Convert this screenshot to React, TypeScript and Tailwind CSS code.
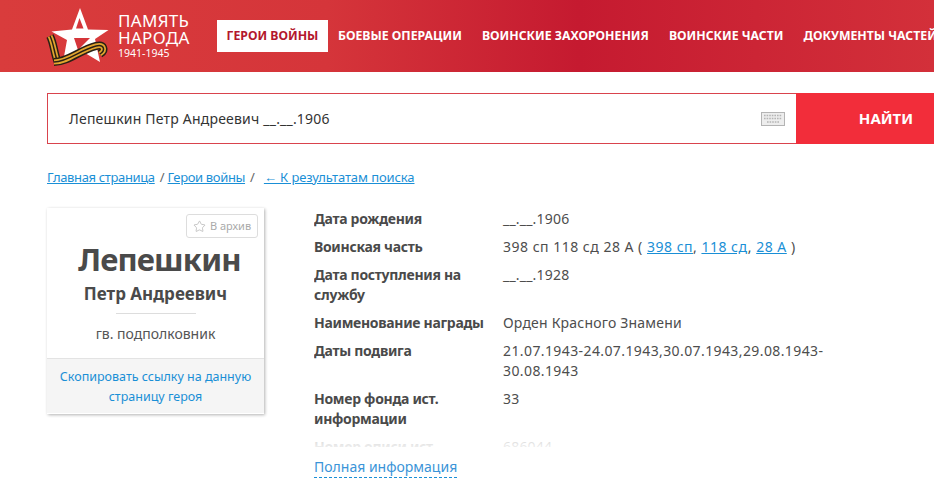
import { Star } from 'lucide-react'
import type { ReactNode } from 'react'

const navItems = ['БОЕВЫЕ ОПЕРАЦИИ', 'ВОИНСКИЕ ЗАХОРОНЕНИЯ', 'ВОИНСКИЕ ЧАСТИ', 'ДОКУМЕНТЫ ЧАСТЕЙ']

// coordinates follow the page: the box starts at x 46, y 4
function Logo() {
  const left = 'M50 36 C54 44 54 53 58 63'
  const band = 'M54 62 C68 62 80 50 96 46 C104 44 106 50 100 54'
  return (
    <svg width="64" height="64" viewBox="46 4 64 64" className="shrink-0">
      <g fill="none">
        <path d={left} stroke="#2a2014" strokeWidth="8" />
        <path d={left} stroke="#e2a52e" strokeWidth="5" />
        <path d={left} stroke="#2a2014" strokeWidth="1.5" />
      </g>
      <path
        d="M80 8 L88 29.5 L108.5 30 L95 39 L100 62 L80 50 L63 62 L67 40 L51.5 31.5 L72 29.5 Z"
        fill="#fff"
      />
      <path d="M79.5 18 L83.5 28.5 L76 28.5 Z" fill="#d5353a" />
      <path d="M74 38 L90 38 L78 50 Z" fill="#d5353a" />
      <g fill="none">
        <path d={band} stroke="#2a2014" strokeWidth="8" />
        <path d={band} stroke="#e2a52e" strokeWidth="5" />
        <path d={band} stroke="#2a2014" strokeWidth="1.5" />
      </g>
    </svg>
  )
}

function Row({ label, children }: { label: string; children: ReactNode }) {
  return (
    <div className="flex leading-5">
      <div className="w-[189px] shrink-0 pr-1 font-bold tracking-[-0.3px] text-[#4a4a4a]">{label}</div>
      <div className="w-[340px] tracking-[0.2px] text-[#4d4d4d]">{children}</div>
    </div>
  )
}

function LinkText({ children }: { children: ReactNode }) {
  return <a className="text-[#1a8fd6] underline">{children}</a>
}

export default function App() {
  return (
    <div className="h-[491px] w-[934px] overflow-hidden bg-white font-['Noto_Sans','Open_Sans',sans-serif] text-[14px]">
      <header className="flex h-[72px] items-center bg-[linear-gradient(90deg,#d93c3c_0%,#d5353a_35%,#c51a30_62%,#d3303a_100%)] pl-[46px]">
        <div className="flex w-[171px] shrink-0 items-center gap-2">
          <Logo />
          <div className="text-white">
            <div className="text-[17px] leading-[17px] tracking-[0.3px]">ПАМЯТЬ</div>
            <div className="text-[17px] leading-[17px] tracking-[0.3px]">НАРОДА</div>
            <div className="mt-[1px] text-[10.5px] leading-[13px]">1941-1945</div>
          </div>
        </div>
        <nav className="flex items-center whitespace-nowrap text-[12.25px] font-bold text-white">
          <div className="flex h-[32px] w-[111px] items-center justify-center bg-white text-[#b3172d]">ГЕРОИ ВОЙНЫ</div>
          <div className="ml-[10px] flex gap-[20px]">
            {navItems.map((item) => (
              <span key={item}>{item}</span>
            ))}
          </div>
        </nav>
      </header>

      <div className="ml-[47px] mt-[21px] flex h-[51px]">
        <div className="flex w-[749px] items-center justify-between border border-r-0 border-[color:#d9434d] pl-[21px] pr-[11px] tracking-[0.2px] text-[#d9434d]">
          <span className="text-[#333]">Лепешкин Петр Андреевич __.__.1906</span>
          <svg width="24" height="14" viewBox="0 0 24 14" className="text-[#b4b4b4]">
            <rect x="0.5" y="0.5" width="23" height="13" fill="#ededed" stroke="currentColor" />
            <path d="M3 3.5h18M3 6.5h18M6 10h12" stroke="currentColor" strokeWidth="1.6" strokeDasharray="1.6 1" />
          </svg>
        </div>
        <button className="flex-1 bg-[#f22d3a] pl-[42px] text-[15px] font-bold text-white">НАЙТИ</button>
      </div>

      <div className="ml-[47px] mt-[24px] flex text-[13px] leading-[18px] text-[#1a8fd6]">
        <a className="tracking-[-0.35px] underline">Главная страница</a>
        <span className="ml-[5px] mr-[3px] text-[#666]">/</span>
        <a className="tracking-[-0.35px] underline">Герои войны</a>
        <span className="mx-[5px] text-[#666]">/</span>
        <a className="ml-[4px] tracking-[-0.1px] underline">← К результатам поиска</a>
      </div>

      <main className="ml-[47px] mt-[22px] flex">
        <aside className="w-[217px] shrink-0">
          <div className="relative h-[206px] bg-white shadow-[1px_1px_3px_rgba(0,0,0,0.3)]">
            <div className="absolute right-[6px] top-[6px] flex h-[24px] w-[72px] items-center justify-center gap-1 rounded-[3px] border border-[#ddd] text-[11px] text-[#aaa]">
              <Star className="h-[13px] w-[13px]" strokeWidth={1.2} />В архив
            </div>
            <div className="flex h-[150px] flex-col items-center">
              <div className="ml-2 mt-[30px] text-[31px] font-bold leading-[42px] tracking-[-0.8px] text-[#4a4a4a]">Лепешкин</div>
              <div className="mt-[3px] text-[17px] font-bold leading-[22px] text-[#4a4a4a]">Петр Андреевич</div>
              <div className="mt-[8px] h-px w-[80px] bg-[#ddd]" />
              <div className="mt-[10px] text-[14px] leading-[20px] text-[#555]">гв. подполковник</div>
            </div>
            <div className="border-t border-[#e3e3e3] bg-[#f5f5f5] px-2 pb-[6px] pt-[8px] text-center text-[12.5px] leading-[20px] text-[#1a8fd6]">
              Скопировать ссылку на данную страницу героя
            </div>
          </div>
        </aside>

        <section className="ml-[50px] flex-1">
          <div className="relative h-[239px] overflow-hidden pt-[1px]">
            <div className="flex flex-col gap-2">
              <Row label="Дата рождения">__.__.1906</Row>
              <Row label="Воинская часть">
                <span className="tracking-[0.5px]">
                  398 сп 118 сд 28 А ( <LinkText>398 сп</LinkText>, <LinkText>118 сд</LinkText>, <LinkText>28 А</LinkText> )
                </span>
              </Row>
              <Row label="Дата поступления на службу">__.__.1928</Row>
              <Row label="Наименование награды">Орден Красного Знамени</Row>
              <Row label="Даты подвига">
                <span className="tracking-[0.4px]">21.07.1943-24.07.1943,30.07.1943,29.08.1943-30.08.1943</span>
              </Row>
              <Row label="Номер фонда ист. информации">33</Row>
              <Row label="Номер описи ист.">686044</Row>
            </div>
            <div className="absolute inset-x-0 bottom-0 h-[14px] bg-gradient-to-b from-white/70 to-white/90" />
          </div>
          <a className="mt-[10px] inline-block border-b border-dashed border-[color:#1a8fd6] leading-[20px] text-[#3a94d8]">Полная информация</a>
        </section>
      </main>
    </div>
  )
}
